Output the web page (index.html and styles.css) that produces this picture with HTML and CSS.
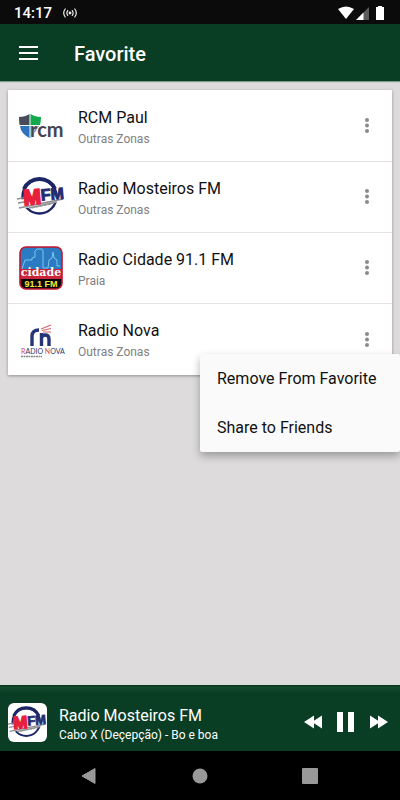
FILE: index.html
```html
<!DOCTYPE html>
<html lang="en">
<head>
  <meta charset="UTF-8"/>
  <meta name="viewport" content="width=device-width, initial-scale=1.0"/>
  <title>Favorite</title>
  <link rel="stylesheet" href="styles.css">
</head>
<body>

  <div class="status-bar">
    <div class="status-left">
      <span>14:17</span>
      <svg width="16" height="12" viewBox="0 0 16 12" fill="none" stroke="#eee" stroke-width="1.2" stroke-linecap="round">
        <circle cx="8" cy="6" r="1.4" fill="#eee" stroke="none"/>
        <path d="M5.7 3.6Q4 6 5.7 8.4M10.3 3.6Q12 6 10.3 8.4M3.2 2Q.2 6 3.2 10M12.8 2Q15.8 6 12.8 10"/>
      </svg>
    </div>
    <svg width="48" height="16" viewBox="0 0 48 16">
      <path d="M0 4Q8 -1 16 4L8 14z" fill="#fff"/>
      <path d="M31 2V15H18z" fill="#5c5c5c"/>
      <path d="M25.5 7.5V15H18z" fill="#fff"/>
      <path d="M40 1h4v1h2v13h-8V2h2z" fill="#fff"/>
    </svg>
  </div>

  <header class="header">
    <button class="icon-btn" aria-label="Open menu">
      <svg width="20" height="14" viewBox="0 0 20 14"><path d="M0 1h19M0 7h19M0 13h19" stroke="#fff" stroke-width="2"/></svg>
    </button>
    <h1>Favorite</h1>
  </header>

  <main>
    <ul class="station-list">
      <li class="station">
        <svg class="logo" viewBox="0 0 48 48">
          <path d="M2 15Q8 15 12.500 12V23H2.500Q2 19 2 15z" fill="#484c5b"/>
          <path d="M13.500 12Q18 15 24 15Q24 19 23 23H13.500z" fill="#10a94b"/>
          <path d="M3 24H12.500V36Q4 32 3 24z" fill="#2f73bd"/>
          <path d="M13.500 24H22L14 36H13.500z" fill="#2f73bd"/>
          <text x="13" y="35" class="rcm-name">rcm</text>
        </svg>
        <div class="station-text">
          <h2>RCM Paul</h2>
          <p>Outras Zonas</p>
        </div>
        <button class="more-btn" aria-label="More options for RCM Paul">
          <svg width="6" height="16" viewBox="0 0 6 16" fill="#8a8a8a"><circle cx="3" cy="2" r="2"/><circle cx="3" cy="7.5" r="2"/><circle cx="3" cy="13" r="2"/></svg>
        </button>
      </li>
      <li class="station">
        <!-- same logo is reused in the player -->
        <svg class="logo" viewBox="0 0 48 48">
          <g id="mfm-logo">
            <circle cx="22.500" cy="23.500" r="17" fill="#fff" stroke="#1c2566" stroke-width="2.400"/>
            <path d="M7 16A17 17 0 0 1 38 16" fill="none" stroke="#1c2566" stroke-width="4"/>
            <path d="M1 27L45 20V28L3 36z" fill="#fff"/>
            <path d="M0 26L11 24M1 30L14 28M2 35L46 26M12 35L40 29" stroke="#8b8b92" stroke-width="1.500"/>
            <text x="7" y="32" class="mfm-name" transform="rotate(-5 8 32)"><tspan class="mfm-red">M</tspan><tspan dy="-3" class="mfm-blue">FM</tspan></text>
            <path d="M15 35L35 31" stroke="#999" stroke-width="1" stroke-dasharray="3 1"/>
          </g>
        </svg>
        <div class="station-text">
          <h2>Radio Mosteiros FM</h2>
          <p>Outras Zonas</p>
        </div>
        <button class="more-btn" aria-label="More options for Radio Mosteiros FM">
          <svg width="6" height="16" viewBox="0 0 6 16" fill="#8a8a8a"><circle cx="3" cy="2" r="2"/><circle cx="3" cy="7.5" r="2"/><circle cx="3" cy="13" r="2"/></svg>
        </button>
      </li>
      <li class="station">
        <svg class="logo" viewBox="0 0 48 48">
          <clipPath id="cidade-clip"><rect x="3" y="3" width="42" height="42" rx="6"/></clipPath>
          <g clip-path="url(#cidade-clip)">
            <rect x="3" y="3" width="42" height="24" fill="#2b7bc2"/>
            <rect x="3" y="25" width="42" height="10" fill="#c8243c"/>
            <rect x="3" y="35" width="42" height="10" fill="#080808"/>
          </g>
          <path d="M5 25L8 16H15V14L18 13V7L20 5H25L26 7V24H31L32 16L35 14L36 8L37 14L40 16V22H43" fill="none" stroke="#7cc4ee" stroke-width="1"/>
          <rect x="3" y="3" width="42" height="42" rx="6" fill="none" stroke="#c4152f" stroke-width="1.600"/>
          <text x="24" y="32" class="cidade-name">cidade</text>
          <text x="24" y="43" class="cidade-freq">91.1 FM</text>
        </svg>
        <div class="station-text">
          <h2>Radio Cidade 91.1 FM</h2>
          <p>Praia</p>
        </div>
        <button class="more-btn" aria-label="More options for Radio Cidade 91.1 FM">
          <svg width="6" height="16" viewBox="0 0 6 16" fill="#8a8a8a"><circle cx="3" cy="2" r="2"/><circle cx="3" cy="7.5" r="2"/><circle cx="3" cy="13" r="2"/></svg>
        </button>
      </li>
      <li class="station">
        <svg class="logo" viewBox="0 0 48 48">
          <path d="M15 30V20Q15 14 22 14M24.500 30V17M24.500 22Q25 19 28 19Q32 19 32 23V30" fill="none" stroke="#26357a" stroke-width="3.400"/>
          <path d="M24 13L34 9M25 14.500L34 12.500M26 16L34 16" stroke="#d66670" stroke-width="1.200"/>
          <text x="4" y="38" class="nova-name"><tspan class="nova-red">R</tspan>ADIO <tspan class="nova-red">N</tspan>OVA</text>
          <path d="M4 40.500H25" stroke="#888" stroke-width="1.300" stroke-dasharray="2 .5"/>
        </svg>
        <div class="station-text">
          <h2>Radio Nova</h2>
          <p>Outras Zonas</p>
        </div>
        <button class="more-btn" aria-label="More options for Radio Nova" aria-expanded="true">
          <svg width="6" height="16" viewBox="0 0 6 16" fill="#8a8a8a"><circle cx="3" cy="2" r="2"/><circle cx="3" cy="7.5" r="2"/><circle cx="3" cy="13" r="2"/></svg>
        </button>
        <div class="popup-menu">
          <button>Remove From Favorite</button>
          <button>Share to Friends</button>
        </div>
      </li>
    </ul>
  </main>

  <footer class="player">
    <svg class="cover" viewBox="0 0 48 48"><use href="#mfm-logo"/></svg>
    <div class="now-playing">
      <h2>Radio Mosteiros FM</h2>
      <p>Cabo X (Deçepção) - Bo e boa</p>
    </div>
    <div class="controls">
      <button class="icon-btn" aria-label="Previous">
        <svg width="18" height="14" viewBox="0 0 18 14" fill="#fff"><path d="M0 7L10 .5V13.500zM8 7L18 .5V13.500z"/></svg>
      </button>
      <button class="icon-btn" aria-label="Pause">
        <svg width="18" height="20" viewBox="0 0 18 20" fill="#fff"><path d="M0 0h6v20H0zM11 0h6v20h-6z"/></svg>
      </button>
      <button class="icon-btn" aria-label="Next">
        <svg width="18" height="14" viewBox="0 0 18 14" fill="#fff"><path d="M18 7L8 .5V13.500zM10 7L0 .5V13.500z"/></svg>
      </button>
    </div>
  </footer>

  <nav class="nav-bar">
    <button class="icon-btn" aria-label="Back">
      <svg width="16" height="18" viewBox="0 0 16 18"><path d="M0 9L13 1.500V16.500z" fill="#999" stroke="#999" stroke-linejoin="round"/></svg>
    </button>
    <button class="icon-btn" aria-label="Home">
      <svg width="16" height="16" viewBox="0 0 16 16"><circle cx="8" cy="8" r="7.500" fill="#999"/></svg>
    </button>
    <button class="icon-btn" aria-label="Recent apps">
      <svg width="16" height="16" viewBox="0 0 16 16"><rect width="16" height="16" rx="1" fill="#999"/></svg>
    </button>
  </nav>

</body>
</html>
```

FILE: styles.css
```css
* {
  box-sizing: border-box;
  margin: 0;
  padding: 0;
}

body {
  display: flex;
  flex-direction: column;
  min-height: 100vh;
  font-family: Roboto, sans-serif;
  background: #dddbdc;
  color: #111;
}

button {
  font: inherit;
  color: inherit;
  background: none;
  border: none;
  cursor: pointer;
}

svg {
  display: block;
}

.status-bar {
  display: flex;
  justify-content: space-between;
  align-items: center;
  height: 24px;
  padding: 1px 14px 0;
  background: #0b0b0b;
  color: #fff;
  font-size: 15px;
  line-height: 18px;
  font-weight: 500;
}

.status-left {
  display: flex;
  align-items: center;
  gap: 10px;
}

.header {
  display: flex;
  align-items: center;
  gap: 35px;
  height: 57px;
  padding: 0 19px;
  background: #093d24;
  color: #fff;
  box-shadow: 0 1px 1px #7d9988;
}

.header h1 {
  padding-top: 2px;
  font-size: 20px;
  line-height: 24px;
  font-weight: 500;
}

.icon-btn {
  display: flex;
  align-items: center;
  justify-content: center;
}

main {
  flex: 1;
  padding: 9px 8px;
}

.station-list {
  list-style: none;
  padding-top: 1px;
  background: #fff;
  box-shadow: 0 1px 3px rgba(0,0,0,0.35);
}

.station {
  position: relative;
  display: flex;
  align-items: center;
  gap: 13px;
  height: 71px;
  padding: 0 14px 0 9px;
  border-bottom: 1px solid #e3e3e3;
}

.station:last-child {
  border-bottom: none;
}

.logo {
  width: 48px;
  height: 48px;
}

.station-text {
  flex: 1;
  padding-top: 3px;
}

.station h2,
.player h2 {
  font-size: 16px;
  line-height: 22px;
  font-weight: 400;
}

.station p {
  font-size: 12px;
  line-height: 20px;
  color: #808080;
}

.more-btn {
  display: flex;
  justify-content: center;
  width: 22px;
}

.popup-menu {
  position: absolute;
  top: 50px;
  right: -8px;
  z-index: 2;
  width: 200px;
  background: #fafafa;
  border-radius: 2px;
  box-shadow: 0 4px 9px rgba(0,0,0,0.3);
}

.popup-menu button {
  display: block;
  width: 100%;
  height: 49px;
  padding: 0 17px;
  font-size: 16px;
  text-align: left;
}

.rcm-name {
  font-family: Lato, sans-serif;
  font-size: 20px;
  font-weight: bold;
  fill: #454552;
  stroke: #fff;
  stroke-width: 1px;
  paint-order: stroke;
}

.mfm-name {
  font-family: "Liberation Sans", sans-serif;
  font-weight: bold;
}

.mfm-red {
  font-size: 21px;
  fill: #e8203c;
  stroke: #e8203c;
  stroke-width: 2px;
}

.mfm-blue {
  font-size: 16px;
  fill: #242c72;
  stroke: #242c72;
  stroke-width: 1px;
}

.cidade-name {
  font-family: "DejaVu Serif", serif;
  font-size: 11px;
  font-weight: bold;
  text-anchor: middle;
  fill: #fff;
}

.cidade-freq {
  font-family: "Liberation Sans", sans-serif;
  font-size: 9px;
  font-weight: bold;
  text-anchor: middle;
  fill: #f5eb3b;
}

.nova-name {
  font-family: Lato, sans-serif;
  font-size: 7px;
  fill: #29356d;
}

.nova-red {
  fill: #d54754;
}

.player {
  display: flex;
  align-items: center;
  gap: 12px;
  height: 66px;
  padding: 8px 12px 0 8px;
  background: linear-gradient(#06301b 0, #164a2e 2px, #093d24 8px);
  color: #fff;
}

.cover {
  width: 39px;
  height: 39px;
  background: #fff;
  border-radius: 6px;
}

.now-playing {
  flex: 1;
  padding-top: 3px;
}

.player p {
  font-size: 12px;
  line-height: 16px;
}

.controls {
  display: flex;
  align-items: center;
  gap: 15px;
}

.nav-bar {
  display: flex;
  justify-content: center;
  align-items: center;
  gap: 94px;
  height: 49px;
  background: #000;
}
```
